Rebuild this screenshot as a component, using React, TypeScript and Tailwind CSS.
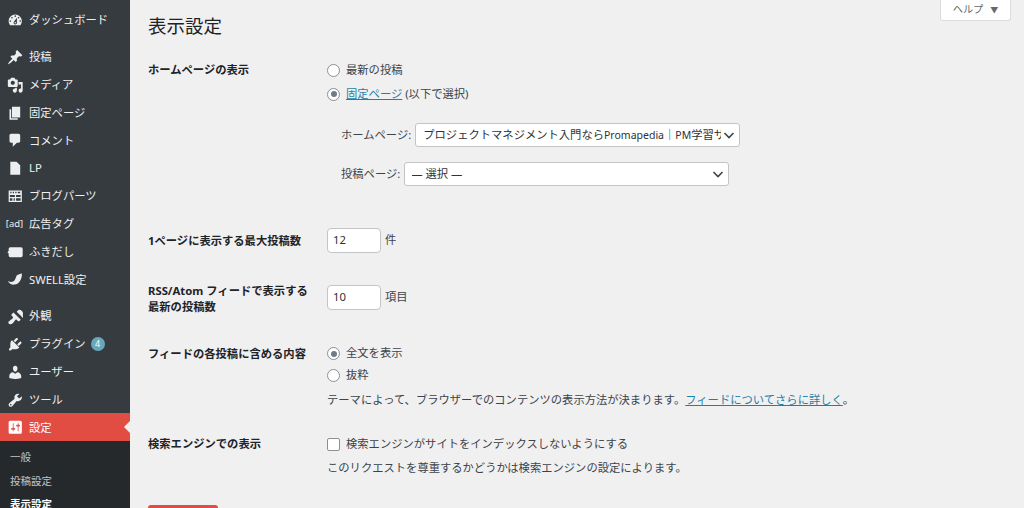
const font = "font-['Noto_Sans','Noto_Sans_CJK_JP',sans-serif]";

const I = ({ children }: { children: React.ReactNode }) => (
  <svg viewBox="0 0 20 20" width="16.5" height="16.5" fill="currentColor">{children}</svg>
);

const icons: Record<string, React.ReactNode> = {
  dash: <I><path d="M3.760 16h12.480c1.100-1.370 1.760-3.110 1.760-5 0-4.420-3.580-8-8-8s-8 3.580-8 8c0 1.890.66 3.630 1.760 5zM10 4c.55 0 1 .45 1 1s-.45 1-1 1-1-.45-1-1 .45-1 1-1zM6 6c.55 0 1 .45 1 1s-.45 1-1 1-1-.45-1-1 .45-1 1-1zm8 0c.55 0 1 .45 1 1s-.45 1-1 1-1-.45-1-1 .45-1 1-1zm-5.370 5.550L12 7v6c0 1.100-.9 2-2 2s-2-.9-2-2c0-.57.24-1.080.63-1.450zM4 10c.55 0 1 .45 1 1s-.45 1-1 1-1-.45-1-1 .45-1 1-1zm12 0c.55 0 1 .45 1 1s-.45 1-1 1-1-.45-1-1 .45-1 1-1zm-5 3c0-.55-.45-1-1-1s-1 .45-1 1 .45 1 1 1 1-.45 1-1z" fillRule="evenodd" /></I>,
  pin: <I><path d="M10.440 3.020l1.820-1.820 6.360 6.350-1.830 1.820c-1.050-.68-2.480-.57-3.410.36l-.75.75c-.92.93-1.040 2.350-.35 3.410l-1.830 1.820-2.410-2.410-2.800 2.790c-.42.42-3.380 2.710-3.800 2.290s1.860-3.390 2.280-3.810l2.790-2.790L4.100 9.360l1.830-1.820c1.050.69 2.480.57 3.400-.36l.75-.75c.93-.92 1.050-2.350.36-3.410z" /></I>,
  media: <I><path fillRule="evenodd" d="M13 11V4c0-.55-.45-1-1-1h-1.670L9 1H5L3.670 3H2c-.55 0-1 .45-1 1v7c0 .55.45 1 1 1h10c.55 0 1-.45 1-1zM7 4.500c1.380 0 2.500 1.120 2.500 2.500S8.380 9.500 7 9.500 4.500 8.380 4.500 7 5.620 4.500 7 4.500zM14 6h5v10.500c0 1.380-1.120 2.500-2.500 2.500S14 17.880 14 16.500s1.120-2.500 2.500-2.500c.17 0 .34.02.5.050V9h-3V6zm-4 8.050V13h2v3.500c0 1.380-1.120 2.500-2.500 2.500S7 17.880 7 16.500 8.120 14 9.500 14c.17 0 .34.02.5.050z" /></I>,
  pages: <I><path d="M6 15V2h10v13H6zm-1 1h8v2H3V5h2v11z" /></I>,
  comment: <I><path d="M5 2h9c1.100 0 2 .9 2 2v7c0 1.100-.9 2-2 2h-2l-5 5v-5H5c-1.100 0-2-.9-2-2V4c0-1.100.9-2 2-2z" /></I>,
  page: <I><path d="M4 2h7.500L16 6.500V18H4z" /></I>,
  parts: <I><path fillRule="evenodd" d="M2 3h16v14H2zm2 1.500v2h1.500v-2zm3 0v2h1.500v-2zm3 0v2h1.500v-2zm3 0v2h3v-2zM3.500 8.500v2.500H9.500V8.500zm7.500 0v2.500h5.500V8.500zM3.500 12.500v3h3v-3zm4.500 0v3h1.500v-3zm3 0v3h5.500v-3z" /></I>,
  bubble: <I><path d="M4 4h13a2 2 0 0 1 2 2v8a2 2 0 0 1-2 2H4a2 2 0 0 1-2-2v-2.500L0.500 10 2 8.500V6a2 2 0 0 1 2-2z" /></I>,
  swell: <I><path d="M18 3c.5 6-3 13-9 13.500-3.500.3-6.500-1.500-8-4.500 2.500 1.500 4.500 1.800 6.500.8 3-1.500 3-5.500 4.500-7.500C13.500 3.800 16 3.500 18 3z" /></I>,
  brush: <I><g transform="translate(-0.500 -0.500) scale(1.250)"><path d="M14.480 11.060L7.410 3.990l1.500-1.500c.5-.56 2.300-.47 3.540.77 1.240 1.230 1.320 3.030.77 3.540z" transform="translate(2.400 0)" /><path d="M13.780 11.770L6.700 4.700 4.930 6.470c-.39.39-.39 1.020 0 1.410l1.060 1.060c.39.39.39 1.030 0 1.420-.6.6-1.430 1.110-2.210 1.690-.35.26-.7.53-1.010.84C1.430 13.230 1.400 14.700 2.300 15.600c.89.89 2.360.86 3.700-.46.31-.31.58-.66.84-1.010.58-.78 1.090-1.610 1.690-2.210.39-.39 1.030-.39 1.420 0l1.060 1.060c.39.39 1.020.39 1.410 0z" /></g></I>,
  plugin: <I><path d="M13.110 4.360L9.870 7.600 8 5.730l3.240-3.240c.35-.34 1.050-.2 1.560.32.52.51.66 1.210.31 1.550zm-8 1.770l.91-1.120 9.010 9.010-1.190.84c-.71.71-2.630 1.160-3.820 1.160H6.140L4.900 17.260c-.59.59-1.540.59-2.120 0-.59-.58-.59-1.530 0-2.120l1.240-1.240v-3.880c0-1.130.4-3.190 1.090-3.890zm7.260 3.970l3.240-3.240c.34-.35 1.040-.21 1.550.31.52.51.66 1.210.31 1.550l-3.240 3.250z" /></I>,
  user: <I><path d="M10 9.250c-2.270 0-2.730-3.440-2.730-3.440C7 4.020 7.820 2 9.970 2c2.160 0 2.980 2.020 2.710 3.810 0 0-.41 3.440-2.680 3.440zm0 2.570L12.720 10c2.390 0 4.520 2.330 4.520 4.530v2.490s-3.650 1.130-7.240 1.130c-3.650 0-7.240-1.130-7.240-1.130v-2.490c0-2.250 1.940-4.480 4.470-4.480z" /></I>,
  tool: <I><path fillRule="evenodd" d="M16.680 9.770c-1.340 1.340-3.300 1.670-4.950.99l-5.410 6.520c-.99.99-2.590.99-3.580 0s-.99-2.590 0-3.570l6.520-5.420c-.68-1.650-.35-3.610.99-4.950 1.280-1.280 3.120-1.620 4.720-1.060l-2.890 2.890 2.820 2.820 2.860-2.870c.53 1.580.18 3.390-1.080 4.670zM3.810 16.210c.4.39 1.040.39 1.430 0 .4-.4.4-1.040 0-1.430-.39-.4-1.030-.4-1.430 0-.39.39-.39 1.030 0 1.430z" /></I>,
  settings: <I><path fillRule="evenodd" d="M18 16V4c0-1.100-.9-2-2-2H4c-1.100 0-2 .9-2 2v12c0 1.100.9 2 2 2h12c1.100 0 2-.9 2-2zM8 11h1c.55 0 1 .45 1 1s-.45 1-1 1H8v1.500c0 .28-.22.5-.5.5s-.5-.22-.5-.5V13H6c-.55 0-1-.45-1-1s.45-1 1-1h1V5.500c0-.28.22-.5.5-.5s.5.22.5.5V11zm5-2h-1c-.55 0-1-.45-1-1s.45-1 1-1h1V5.500c0-.28.22-.5.5-.5s.5.22.5.5V7h1c.55 0 1 .45 1 1s-.45 1-1 1h-1v5.500c0 .28-.22.5-.5.5s-.5-.22-.5-.5V9z" /></I>,
};

const AdIcon = () => <span className="text-[9.5px] leading-none -ml-[1px]">[ad]</span>;

const Item = ({ icon, label, badge }: { icon: React.ReactNode; label: string; badge?: string }) => (
  <div className="flex h-[27.8px] shrink-0 items-center text-[11.3px] text-[#f0f0f1]">
    <span className="flex w-[29px] justify-center pl-[1px] pt-[1px] text-[#eceeef]">{icon}</span>
    <span className="pt-[2px]">{label}</span>
    {badge && <span className="ml-[5px] flex h-[14px] w-[14px] items-center justify-center rounded-full bg-[#69a8bb] text-[9px] text-white">{badge}</span>}
  </div>
);

const Sidebar = () => (
  <aside className="flex h-[508px] w-[130px] shrink-0 flex-col overflow-hidden bg-[#363b3f] pt-[6px]">
    <Item icon={icons.dash} label="ダッシュボード" />
    <div className="h-[9px] shrink-0" />
    <Item icon={icons.pin} label="投稿" />
    <Item icon={icons.media} label="メディア" />
    <Item icon={icons.pages} label="固定ページ" />
    <Item icon={icons.comment} label="コメント" />
    <Item icon={icons.page} label="LP" />
    <Item icon={icons.parts} label="ブログパーツ" />
    <Item icon={<AdIcon />} label="広告タグ" />
    <Item icon={icons.bubble} label="ふきだし" />
    <Item icon={icons.swell} label="SWELL設定" />
    <div className="h-[9px] shrink-0" />
    <Item icon={icons.brush} label="外観" />
    <Item icon={icons.plugin} label="プラグイン" badge="4" />
    <Item icon={icons.user} label="ユーザー" />
    <Item icon={icons.tool} label="ツール" />
    <div className="relative flex h-[28px] shrink-0 items-center bg-[#e14d43] text-[11.3px] text-white">
      <span className="flex w-[29px] justify-center pl-[1px]">{icons.settings}</span>
      <span className="pt-[2px]">設定</span>
      <span className="absolute right-0 top-[8px] h-0 w-0 border-y-[6px] border-r-[6px] border-y-transparent border-r-[#f0f0f1]" />
    </div>
    <div className="flex flex-1 flex-col gap-[6px] bg-[#26292c] pl-[10px] pt-[8px] text-[10.5px] leading-[17.5px] text-[#c3c4c5]">
      <span>一般</span>
      <span>投稿設定</span>
      <span className="font-bold text-white">表示設定</span>
    </div>
  </aside>
);

const Radio = ({ checked }: { checked?: boolean }) => (
  <span className="flex h-[13px] w-[13px] shrink-0 items-center justify-center rounded-full border border-[#8c8f94] bg-white">
    {checked && <span className="h-[6px] w-[6px] rounded-full bg-[#6f7c88]" />}
  </span>
);

const Chevron = () => (
  <svg width="12" height="12" viewBox="0 0 12 12" fill="none" stroke="#3c434a" strokeWidth="1.6"><path d="M1.500 4l4.500 4.500L10.500 4" /></svg>
);

const Select = ({ children }: { children: React.ReactNode }) => (
  <div className="flex h-[24px] w-[325px] items-center justify-between overflow-hidden rounded-[3px] border border-[#c3c4c7] bg-white pl-[7px] pr-[4px] text-[11.3px] text-[#2c3338]">
    <span className="w-[298px] overflow-hidden whitespace-nowrap">{children}</span>
    <span className="shrink-0"><Chevron /></span>
  </div>
);

const NumInput = ({ v }: { v: string }) => (
  <div className="flex h-[25px] w-[54px] items-center rounded-[4px] border border-[#c3c4c7] bg-white pl-[5px] text-[11.3px] text-[#2c3338]">{v}</div>
);

const Label = ({ children }: { children: React.ReactNode }) => (
  <div className="w-[179px] shrink-0 text-[11.3px] font-bold leading-[16px] text-[#1d2327]">{children}</div>
);

const App = () => (
  <div className={`${font} flex h-[508px] w-[1024px] overflow-hidden bg-[#f0f0f1] text-[11.3px] text-[#3c434a]`}>
    <Sidebar />
    <main className="relative flex-1 pl-[18px]">
      <div className="absolute right-[13px] top-0 flex h-[21px] w-[71px] items-center justify-center gap-[7px] rounded-b-[3px] border border-t-0 border-[#dcdcde] bg-white text-[10.2px] text-[#646970]">
        ヘルプ <span className="text-[8px]">▼</span>
      </div>
      <h1 className="pt-[13px] text-[18.5px] leading-[26px] text-[#1d2327]">表示設定</h1>

      <section className="flex pt-[22px]">
        <Label><div className="pt-[1px]">ホームページの表示</div></Label>
        <div className="-mt-[3px] flex flex-col">
          <div className="flex h-[24px] items-center gap-[6px]"><Radio />最新の投稿</div>
          <div className="flex h-[24px] items-center gap-[6px]"><Radio checked /><span><span className="text-[#1e7fa8] underline">固定ページ</span> (以下で選択)</span></div>
          <div className="flex items-center gap-[4px] pl-[14px] pt-[17px]">ホームページ:<Select>プロジェクトマネジメント入門なら<span className="text-[10.5px]">Promapedia</span>｜<span className="text-[10.5px]">PM</span>学習サイト</Select></div>
          <div className="flex items-center gap-[4px] pl-[14px] pt-[15px]">投稿ページ:<Select><span className="-ml-[1px]">— 選択 —</span></Select></div>
        </div>
      </section>

      <section className="flex items-center pt-[42px]">
        <Label>1ページに表示する最大投稿数</Label>
        <div className="flex items-center gap-[4px]"><NumInput v="12" />件</div>
      </section>

      <section className="flex items-center pt-[26px]">
        <Label><div className="pt-[4px]">RSS/Atom フィードで表示する<br />最新の投稿数</div></Label>
        <div className="flex items-center gap-[4px]"><NumInput v="10" />項目</div>
      </section>

      <section className="flex pt-[31px]">
        <Label>フィードの各投稿に含める内容</Label>
        <div className="flex flex-col">
          <div className="-mt-[3px] flex h-[21px] items-center gap-[6px]"><Radio checked />全文を表示</div>
          <div className="flex h-[22px] items-center gap-[6px]"><Radio />抜粋</div>
          <div className="pt-[6px] leading-[16px]">テーマによって、ブラウザーでのコンテンツの表示方法が決まります。<span className="text-[#1e7fa8] underline">フィードについてさらに詳しく</span>。</div>
        </div>
      </section>

      <section className="flex pt-[28px]">
        <Label>検索エンジンでの表示</Label>
        <div className="flex flex-col">
          <div className="flex h-[16px] items-center gap-[6px]"><span className="h-[13px] w-[13px] rounded-[2px] border border-[#8c8f94] bg-white" />検索エンジンがサイトをインデックスしないようにする</div>
          <div className="pt-[8px] leading-[16px]">このリクエストを尊重するかどうかは検索エンジンの設定によります。</div>
        </div>
      </section>

      <div className="mt-[29px] h-[28px] w-[70px] rounded-[3px] bg-[#e14d43]" />
    </main>
  </div>
);

export default App;
